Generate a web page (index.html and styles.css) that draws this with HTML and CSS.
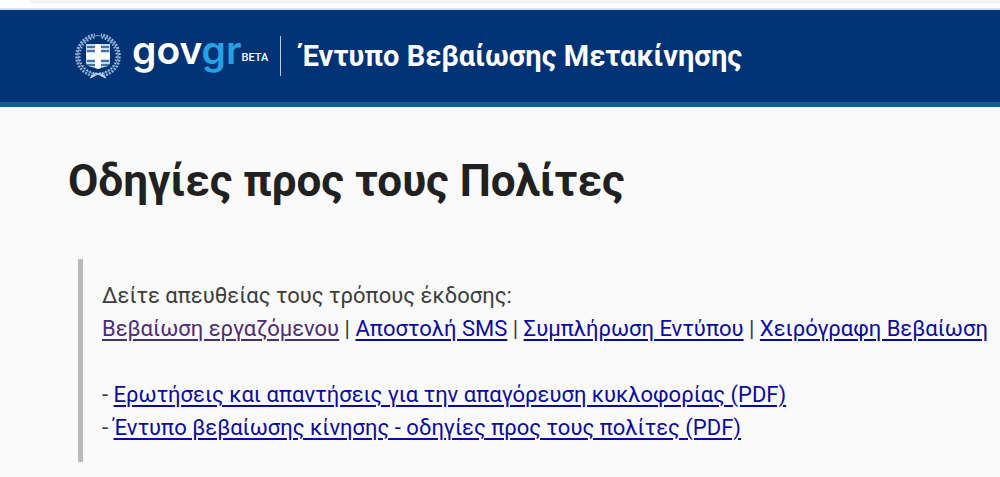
FILE: index.html
```html
<!DOCTYPE html>
<html lang="el">
<head>
<meta charset="utf-8">
<meta name="viewport" content="width=device-width, initial-scale=1">
<title>Έντυπο Βεβαίωσης Μετακίνησης</title>
<link rel="stylesheet" href="styles.css">
</head>
<body>
<div class="top-strip"><div class="top-strip-edge"></div></div>
<header class="site-header">
  <a class="brand" href="#">
    <svg class="emblem" viewBox="0 0 48 48" aria-hidden="true">
      <g fill="none" stroke="#c5daf0">
        <path d="M19 44C8 41 2 33 2.500 23S11 4 21 2.500M29 44c11-3 17-11 16.500-21S37 4 27 2.500" stroke-width="2.600" stroke-dasharray="2 1.200" opacity=".75"/>
        <path d="M20 41C11 39 5 32 5.500 23S13 7 21 5.500M28 41c9-2 15-9 14.500-18S35 7 27 5.500" stroke-width="2" stroke-dasharray="1.500 1.700" opacity=".8"/>
        <path d="M20 42C10 39 4 32 4 23S12 5 24 3.500M28 42c10-3 16-10 16-19S36 5 24 3.500" stroke-width="1" opacity=".6"/>
        <path d="M17 45l5-4 4 2 6 3M31 45l-5-4-4 2-6 3" stroke-width="1.200"/>
      </g>
      <path d="M12 12h24v19c0 4-8 4-12 6-4-2-12-2-12-6z" fill="#c5daf0"/>
      <path d="M13 15h22M13 19h22M13 29h22M13 33h22" stroke="#1d518f" stroke-width="1.600"/>
      <path d="M21 12h6v9h9v6h-9v9l-3 1-3-1v-9h-9v-6h9z" fill="#fff"/>
    </svg>
    <span class="wordmark">gov<span class="wordmark-accent">gr</span></span>
    <span class="beta">BETA</span>
  </a>
  <span class="service-name">Έντυπο Βεβαίωσης Μετακίνησης</span>
</header>
<main class="content">
  <h1 class="page-title">Οδηγίες προς τους Πολίτες</h1>
  <section class="inset">
    <p class="inset-text">Δείτε απευθείας τους τρόπους έκδοσης:</p>
    <nav class="inset-text"><a class="link visited" href="#">Βεβαίωση εργαζόμενου</a> | <a class="link" href="#">Αποστολή SMS</a> | <a class="link" href="#">Συμπλήρωση Εντύπου</a> | <a class="link" href="#">Χειρόγραφη Βεβαίωση</a></nav>
    <div class="documents">
      <p class="inset-text">- <a class="link" href="#">Ερωτήσεις και απαντήσεις για την απαγόρευση κυκλοφορίας (PDF)</a></p>
      <p class="inset-text">- <a class="link" href="#">Έντυπο βεβαίωσης κίνησης - οδηγίες προς τους πολίτες (PDF)</a></p>
    </div>
  </section>
</main>
</body>
</html>
```
FILE: styles.css
```css
* {
  box-sizing: border-box;
}

body {
  margin: 0;
  background: #fafafa;
  color: #3c3c3c;
  font-family: Roboto, "Liberation Sans", sans-serif;
  overflow-x: hidden;
}

.top-strip {
  height: 10px;
  padding-left: 30px;
  background: #fefefe;
  border-bottom: 2px solid #d3e3f3;
}

.top-strip-edge {
  height: 3px;
  background: #f0f3f4;
  border-bottom-left-radius: 3px;
}

.site-header {
  display: flex;
  align-items: center;
  height: 97px;
  padding: 0 74px;
  background: #003375;
  border-bottom: 5px solid #0a5f9b;
}

.brand {
  display: flex;
  align-items: center;
  color: #fff;
  text-decoration: none;
}

.emblem {
  width: 48px;
  height: 48px;
  margin-right: 10px;
}

.wordmark {
  font: 600 39px/40px Inter, sans-serif;
  padding-bottom: 12px;
}

.wordmark-accent {
  color: #27a0e4;
}

.beta {
  font: 500 11px/16px Roboto, sans-serif;
  padding-top: 4px;
}

.service-name {
  margin-left: 12px;
  padding-left: 20px;
  border-left: 1px solid #b9cbe0;
  color: #fff;
  font-size: 29px;
  font-weight: 700;
  line-height: 40px;
  white-space: nowrap;
}

.content {
  padding: 46px 0 15px 68px;
}

.page-title {
  margin: 0;
  color: #212121;
  font-size: 44px;
  font-weight: 700;
  line-height: 56px;
}

.inset {
  margin: 50px 0 0 10px;
  padding: 20px 0 18px 19px;
  border-left: 5px solid #bababa;
}

.inset-text {
  margin: 0;
  font-size: 22px;
  line-height: 33px;
  white-space: nowrap;
}

.documents {
  margin-top: 33px;
}

.link {
  color: #0b0b9c;
  text-decoration-thickness: 2px;
  text-underline-offset: 3px;
}

.visited {
  color: #4c2c72;
}
```
